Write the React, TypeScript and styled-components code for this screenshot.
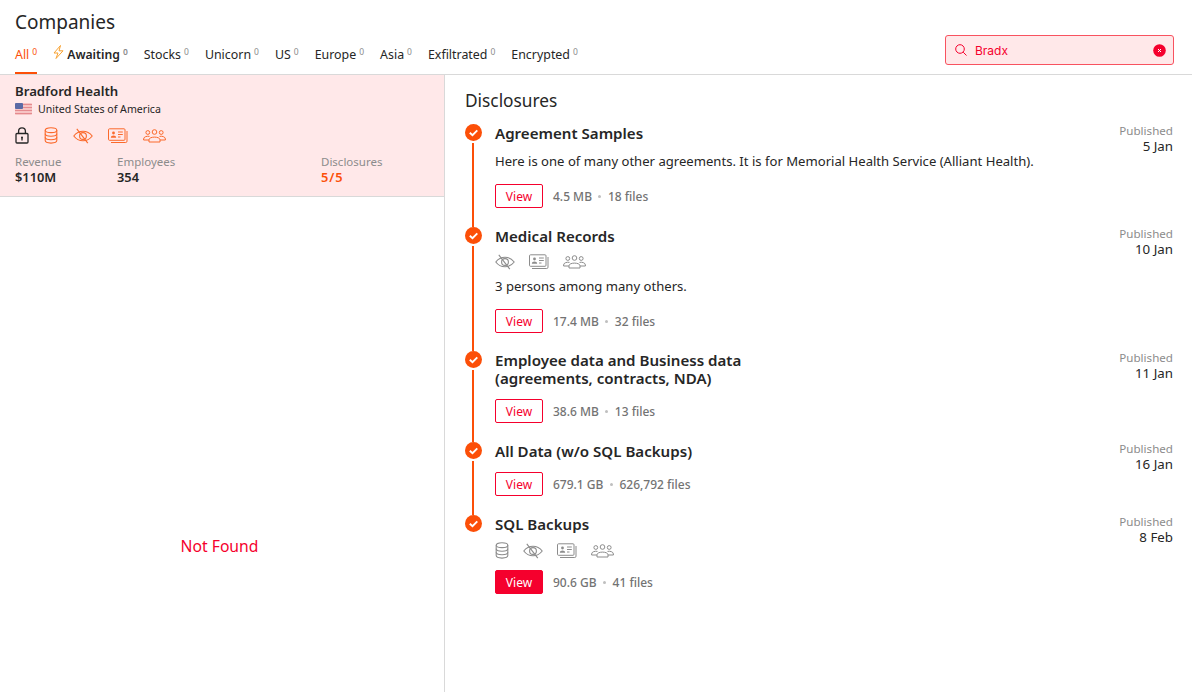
import React from 'react';
import styled, { createGlobalStyle } from 'styled-components';

const ORANGE = '#fc4f08';
const RED = '#f5002d';
const DARK = '#262626';
const GREY = '#8c8c8c';

const GlobalStyle = createGlobalStyle`
  html, body {
    margin: 0;
    padding: 0;
    background: #ffffff;
  }
  * {
    box-sizing: border-box;
  }
  body {
    font-family: 'Noto Sans', Roboto, sans-serif;
    color: ${DARK};
  }
`;

const tabs = ['Stocks', 'Unicorn', 'US', 'Europe', 'Asia', 'Exfiltrated', 'Encrypted'];

type IconProps = { color: string };

const LockIcon = ({ color }: IconProps) => (
  <svg width="14" height="17" viewBox="0 0 14 17" fill="none" stroke={color} strokeWidth="1.3">
    <rect x="1" y="6.5" width="12" height="9.5" rx="1" />
    <path d="M3.6 6.5V4.2a3.4 3.4 0 0 1 6.8 0v2.3" />
    <circle cx="7" cy="10.5" r="1" fill={color} stroke="none" />
    <path d="M7 10.5v3" />
  </svg>
);

const DatabaseIcon = ({ color }: IconProps) => (
  <svg width="14" height="17" viewBox="0 0 14 17" fill="none" stroke={color} strokeWidth="1.1">
    <ellipse cx="7" cy="3.2" rx="5.8" ry="2.4" />
    <path d="M1.2 3.2v10.4c0 1.4 2.6 2.5 5.8 2.5s5.8-1.1 5.8-2.5V3.2" />
    <path d="M1.2 6.7c0 1.4 2.6 2.5 5.8 2.5s5.8-1.1 5.8-2.5" />
    <path d="M1.2 10.2c0 1.4 2.6 2.5 5.8 2.5s5.8-1.1 5.8-2.5" />
  </svg>
);

const EyeOffIcon = ({ color }: IconProps) => (
  <svg width="20" height="16" viewBox="0 0 20 16" fill="none" stroke={color} strokeWidth="1.1">
    <path d="M0.8 8C3.2 4.8 6.4 3.2 10 3.2s6.800 1.600 9.200 4.800c-2.400 3.200-5.600 4.800-9.200 4.800S3.200 11.200 0.800 8z" />
    <circle cx="10" cy="8" r="3.400" />
    <path d="M3.800 0.800L14.800 15.200" />
  </svg>
);

const IdCardsIcon = ({ color }: IconProps) => (
  <svg width="20" height="16" viewBox="0 0 20 16" fill="none" stroke={color} strokeWidth="1">
    <rect x="0.500" y="0.800" width="16.500" height="11.500" rx="1" />
    <path d="M19 3v10.200a1.300 1.300 0 0 1-1.300 1.300H3" />
    <circle cx="5.500" cy="5" r="1.400" fill={color} stroke="none" />
    <path d="M2.800 9.800c0-3.200 5.400-3.200 5.400 0z" fill={color} stroke="none" />
    <path d="M10 4h4.800M10 6.500h4.800M10 9h2.500" />
  </svg>
);

const PeopleIcon = ({ color }: IconProps) => (
  <svg width="23" height="14" viewBox="0 0 23 14" fill="none" stroke={color} strokeWidth="1">
    <circle cx="11.500" cy="3" r="2.300" />
    <circle cx="4.800" cy="3.500" r="1.900" />
    <circle cx="18.200" cy="3.500" r="1.900" />
    <path d="M6 13v-2.200c0-3.600 11-3.600 11 0V13z" />
    <path d="M6.500 7.400C4 6.800 0.600 7.800 0.600 10v1H6" />
    <path d="M16.500 7.400c2.500-.6 5.900.4 5.900 2.600v1H17" />
  </svg>
);

const BoltIcon = () => (
  <svg width="11" height="14" viewBox="0 0 11 14" fill="none" stroke="#f7a233" strokeWidth="1">
    <path d="M7.500 0.500L1 8h4L3 13.500 10 5.800H6z" />
  </svg>
);

const SearchIcon = () => (
  <svg width="12" height="12" viewBox="0 0 12 12" fill="none" stroke={RED} strokeWidth="1">
    <circle cx="5" cy="5" r="4.300" />
    <path d="M8.200 8.200L11.500 11.500" />
  </svg>
);

const ClearIcon = () => (
  <svg width="13" height="13" viewBox="0 0 13 13">
    <circle cx="6.500" cy="6.500" r="6.300" fill={RED} />
    <path d="M5 5l3 3M8 5l-3 3" stroke="#fff" strokeWidth="1" />
  </svg>
);

const CheckCircle = () => (
  <svg width="17" height="17" viewBox="0 0 17 17">
    <circle cx="8.500" cy="8.500" r="8.500" fill={ORANGE} />
    <path d="M4.800 8.700l2.700 2.500 4.800-4.800" fill="none" stroke="#fff" strokeWidth="1.900" />
  </svg>
);

const UsFlag = () => (
  <svg width="17" height="12" viewBox="0 0 17 12">
    <rect width="17" height="12" rx="1" fill="#f6c4c4" />
    <path d="M0 1.500h17M0 4.500h17M0 7.500h17M0 10.500h17" stroke="#e58a8f" strokeWidth="1" />
    <rect width="8" height="6" rx="1" fill="#5a6aa5" />
  </svg>
);

const Page = styled.div`
  width: 1192px;
  height: 692px;
  overflow: hidden;
  display: flex;
  flex-direction: column;
`;

const Header = styled.header`
  height: 75px;
  flex: none;
  padding: 10px 18px 0 15px;
  border-bottom: 1px solid #d9d9d9;
  display: flex;
  justify-content: space-between;
`;

const HeaderLeft = styled.div`
  display: flex;
  flex-direction: column;
`;

const PageTitle = styled.h1`
  margin: 0;
  font-size: 19px;
  font-weight: 400;
  line-height: 24px;
`;

const TabRow = styled.nav`
  display: flex;
  margin-top: 9px;
  gap: 16px;
`;

const Tab = styled.div<{ $active?: boolean; $bold?: boolean }>`
  height: 31px;
  display: flex;
  align-items: flex-start;
  padding-top: 3px;
  font-size: ${(p) => (p.$bold ? 12.2 : 12.4)}px;
  line-height: 18px;
  font-weight: ${(p) => (p.$bold ? 600 : 400)};
  color: ${(p) => (p.$active ? ORANGE : DARK)};
  border-bottom: 2px solid ${(p) => (p.$active ? ORANGE : 'transparent')};

  svg {
    margin: -1px 3px 0 0;
  }
`;

const TabCount = styled.sup<{ $active?: boolean }>`
  font-size: 8.5px;
  line-height: 10px;
  margin: 1px 0 0 3px;
  vertical-align: baseline;
  color: ${(p) => (p.$active ? ORANGE : GREY)};
`;

const SearchBox = styled.div`
  width: 229px;
  height: 30px;
  margin-top: 25px;
  padding: 0 7px 0 9px;
  display: flex;
  align-items: center;
  background: #ffe8e9;
  border: 1px solid #f8525f;
  border-radius: 3px;
`;

const SearchText = styled.span`
  flex: 1;
  margin-left: 8px;
  font-family: Inter, sans-serif;
  font-size: 12px;
  color: ${RED};
`;

const Body = styled.div`
  flex: 1;
  display: flex;
  min-height: 0;
`;

const LeftPane = styled.aside`
  width: 445px;
  flex: none;
  display: flex;
  flex-direction: column;
  border-right: 1px solid #d9d9d9;
`;

const CompanyCard = styled.div`
  height: 122px;
  flex: none;
  padding: 7px 15px 0;
  background: #ffe8e9;
  border-bottom: 1px solid #d9d9d9;
`;

const CompanyName = styled.div`
  font-size: 13.2px;
  font-weight: 600;
  line-height: 19px;
`;

const Country = styled.div`
  display: flex;
  align-items: center;
  gap: 6px;
  font-size: 10.600px;
  line-height: 16px;
`;

const IconRow = styled.div<{ $gap: number; $top: number }>`
  display: flex;
  align-items: center;
  gap: ${(p) => p.$gap}px;
  margin-top: ${(p) => p.$top}px;
`;

const StatsRow = styled.div`
  display: grid;
  grid-template-columns: 102px 204px 1fr;
  margin-top: 10px;
`;

const StatLabel = styled.div`
  font-size: 11.500px;
  line-height: 16px;
  color: ${GREY};
`;

const StatValue = styled.div<{ $accent?: boolean }>`
  font-size: 12.800px;
  font-weight: 600;
  line-height: 15px;
  letter-spacing: ${(p) => (p.$accent ? 0.9 : 0)}px;
  color: ${(p) => (p.$accent ? ORANGE : DARK)};
`;

const NotFound = styled.div`
  flex: 1;
  display: flex;
  align-items: center;
  justify-content: center;
  padding: 203px 5px 0 0;
  font-size: 15.700px;
  color: ${RED};
`;

const RightPane = styled.main`
  flex: 1;
  padding: 14px 19px 0 20px;
`;

const SectionTitle = styled.h2`
  margin: 0 0 11px;
  font-size: 17.300px;
  font-weight: 400;
  line-height: 24px;
`;

const Item = styled.div<{ $height: number }>`
  display: flex;
  height: ${(p) => p.$height}px;
`;

const Rail = styled.div`
  width: 30px;
  flex: none;
  display: flex;
  flex-direction: column;
  align-items: flex-start;
`;

const RailDot = styled.div`
  height: 17px;
  width: 17px;
  flex: none;
`;

const RailLine = styled.div`
  width: 2px;
  flex: 1;
  margin: 2px 0 0 7px;
  background: ${ORANGE};
`;

const ItemBody = styled.div`
  flex: 1;
  display: flex;
  flex-direction: column;
  align-items: flex-start;
`;

const ItemTitle = styled.div`
  font-size: 15.100px;
  font-weight: 600;
  line-height: 18px;
`;

const ItemText = styled.div<{ $top: number }>`
  font-size: 13.100px;
  line-height: 20px;
  margin-top: ${(p) => p.$top}px;
`;

const ViewRow = styled.div<{ $top: number }>`
  display: flex;
  align-items: center;
  margin-top: ${(p) => p.$top}px;
`;

const ViewButton = styled.button<{ $filled?: boolean }>`
  width: 48px;
  height: 24px;
  padding: 0;
  border: 1px solid ${RED};
  border-radius: 2px;
  font-family: inherit;
  font-size: 12px;
  background: ${(p) => (p.$filled ? RED : '#ffffff')};
  color: ${(p) => (p.$filled ? '#ffffff' : RED)};
`;

const Meta = styled.div`
  display: flex;
  align-items: center;
  gap: 6.5px;
  margin-left: 10px;
  font-size: 12px;
  font-weight: 500;
  color: #737373;
`;

const MetaDot = styled.span`
  width: 3px;
  height: 3px;
  border-radius: 50%;
  background: #bfbfbf;
`;

const PublishedCol = styled.div`
  width: 90px;
  flex: none;
  text-align: right;
  font-size: 13.300px;
  line-height: 15px;
`;

const PublishedLabel = styled.div`
  margin: -1px 0 1px;
  font-size: 11.600px;
  color: ${GREY};
`;

type Disclosure = {
  title: React.ReactNode;
  text?: string;
  icons?: ('db' | 'eye' | 'id' | 'people')[];
  size: string;
  files: string;
  date: string;
  height: number;
  filled?: boolean;
};

const disclosures: Disclosure[] = [
  {
    title: 'Agreement Samples',
    text: 'Here is one of many other agreements. It is for Memorial Health Service (Alliant Health).',
    size: '4.5 MB',
    files: '18 files',
    date: '5 Jan',
    height: 103,
  },
  {
    title: 'Medical Records',
    text: '3 persons among many others.',
    icons: ['eye', 'id', 'people'],
    size: '17.4 MB',
    files: '32 files',
    date: '10 Jan',
    height: 124,
  },
  {
    title: (
      <>
        Employee data and Business data
        <br />
        (agreements, contracts, NDA)
      </>
    ),
    size: '38.6 MB',
    files: '13 files',
    date: '11 Jan',
    height: 91,
  },
  {
    title: 'All Data (w/o SQL Backups)',
    size: '679.1 GB',
    files: '626,792 files',
    date: '16 Jan',
    height: 73,
  },
  {
    title: 'SQL Backups',
    icons: ['db', 'eye', 'id', 'people'],
    size: '90.6 GB',
    files: '41 files',
    date: '8 Feb',
    height: 90,
    filled: true,
  },
];

const iconMap = {
  db: DatabaseIcon,
  eye: EyeOffIcon,
  id: IdCardsIcon,
  people: PeopleIcon,
};

function viewTop(d: Disclosure) {
  if (d.text) return 13;
  return d.icons ? 11 : 12;
}

export default function App() {
  return (
    <Page>
      <GlobalStyle />
      <Header>
        <HeaderLeft>
          <PageTitle>Companies</PageTitle>
          <TabRow>
            <Tab $active>
              All<TabCount $active>0</TabCount>
            </Tab>
            <Tab $bold>
              <BoltIcon />
              Awaiting<TabCount>0</TabCount>
            </Tab>
            {tabs.map((t) => (
              <Tab key={t}>
                {t}
                <TabCount>0</TabCount>
              </Tab>
            ))}
          </TabRow>
        </HeaderLeft>
        <SearchBox>
          <SearchIcon />
          <SearchText>Bradx</SearchText>
          <ClearIcon />
        </SearchBox>
      </Header>
      <Body>
        <LeftPane>
          <CompanyCard>
            <CompanyName>Bradford Health</CompanyName>
            <Country>
              <UsFlag />
              United States of America
            </Country>
            <IconRow $gap={15} $top={10}>
              <LockIcon color={DARK} />
              <DatabaseIcon color="#fb6a2c" />
              <EyeOffIcon color="#fb6a2c" />
              <IdCardsIcon color="#fb6a2c" />
              <PeopleIcon color="#fb6a2c" />
            </IconRow>
            <StatsRow>
              <div>
                <StatLabel>Revenue</StatLabel>
                <StatValue>$110M</StatValue>
              </div>
              <div>
                <StatLabel>Employees</StatLabel>
                <StatValue>354</StatValue>
              </div>
              <div>
                <StatLabel>Disclosures</StatLabel>
                <StatValue $accent>5/5</StatValue>
              </div>
            </StatsRow>
          </CompanyCard>
          <NotFound>Not Found</NotFound>
        </LeftPane>
        <RightPane>
          <SectionTitle>Disclosures</SectionTitle>
          {disclosures.map((d, i) => (
            <Item key={i} $height={d.height}>
              <Rail>
                <RailDot>
                  <CheckCircle />
                </RailDot>
                {i < disclosures.length - 1 && <RailLine />}
              </Rail>
              <ItemBody>
                <ItemTitle>{d.title}</ItemTitle>
                {d.icons && (
                  <IconRow $gap={14} $top={9}>
                    {d.icons.map((k) => {
                      const Icon = iconMap[k];
                      return <Icon key={k} color="#8c8c8c" />;
                    })}
                  </IconRow>
                )}
                {d.text && <ItemText $top={d.icons ? 6 : 9}>{d.text}</ItemText>}
                <ViewRow $top={viewTop(d)}>
                  <ViewButton $filled={d.filled}>View</ViewButton>
                  <Meta>
                    {d.size}
                    <MetaDot />
                    {d.files}
                  </Meta>
                </ViewRow>
              </ItemBody>
              <PublishedCol>
                <PublishedLabel>Published</PublishedLabel>
                {d.date}
              </PublishedCol>
            </Item>
          ))}
        </RightPane>
      </Body>
    </Page>
  );
}
